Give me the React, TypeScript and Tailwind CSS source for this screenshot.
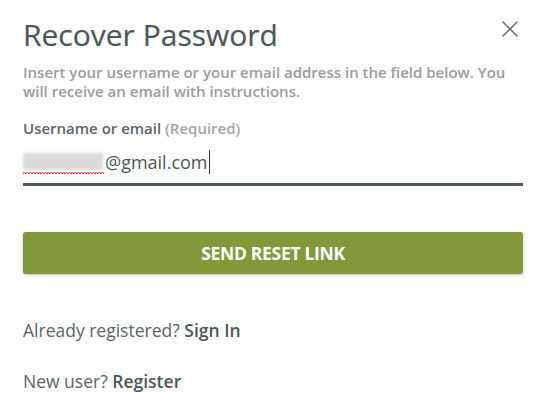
import { X } from 'lucide-react';

const Squiggle = () => (
  <svg width="82" height="4" viewBox="0 0 82 4" className="absolute left-0 bottom-[-3px]">
    <path
      d="M0 3 L1.5 1 L3 3 L4.5 1 L6 3 L7.5 1 L9 3 L10.5 1 L12 3 L13.5 1 L15 3 L16.5 1 L18 3 L19.5 1 L21 3 L22.5 1 L24 3 L25.5 1 L27 3 L28.5 1 L30 3 L31.5 1 L33 3 L34.5 1 L36 3 L37.5 1 L39 3 L40.5 1 L42 3 L43.5 1 L45 3 L46.5 1 L48 3 L49.5 1 L51 3 L52.5 1 L54 3 L55.5 1 L57 3 L58.5 1 L60 3 L61.5 1 L63 3 L64.5 1 L66 3 L67.5 1 L69 3 L70.5 1 L72 3 L73.5 1 L75 3 L76.5 1 L78 3 L79.5 1 L81 3"
      fill="none"
      stroke="#e53030"
      strokeWidth="1"
    />
  </svg>
);

const App = () => {
  return (
    <div className="relative w-[542px] h-[406px] bg-white font-['Open_Sans',sans-serif] overflow-hidden">
      {/* Close */}
      <button className="absolute right-[18px] top-[15px] text-[#6b6b6b]">
        <X className="w-[28px] h-[28px]" strokeWidth={1.3} />
      </button>

      <div className="pl-[23px] pr-[19px] pt-[14px]">
        <h1 className="text-[30px] leading-[42px] text-[#4b5759] [-webkit-text-stroke:0.2px_#4b5759]">Recover Password</h1>
        <p className="mt-[7px] text-[15px] leading-[19px] font-semibold text-[#9c9c9c]">
          Insert your username or your email address in the field below. You will receive an email with instructions.
        </p>

        <label className="block mt-[17px] text-[15px] leading-[20px] font-semibold text-[#5b6568]">
          Username or email <span className="text-[#a5a5a5]">(Required)</span>
        </label>

        {/* Input */}
        <div className="mt-[12px] border-b-[3px] border-[#4e5a5c] pb-[9px] flex items-center text-[18px] leading-[24px] text-[#4b5759]">
          <span className="relative inline-block w-[82px] h-[20px]">
            <span className="absolute left-0 right-[2px] top-[1px] h-[17px] bg-[#dadada] blur-[1.5px]" />
            <Squiggle />
          </span>
          <span>@gmail.com</span>
          <span className="ml-[1px] w-[1px] h-[24px] bg-[#333]" />
        </div>

        <button className="mt-[46px] w-full h-[42px] rounded-[3px] bg-[#82983b] shadow-[0_1px_3px_rgba(0,0,0,0.25)] text-white font-bold text-[17.5px] tracking-[-0.3px]">
          SEND RESET LINK
        </button>

        <p className="mt-[43px] text-[17.5px] leading-[26px] text-[#5b6568]">
          Already registered? <span className="font-semibold text-[#4b5759]">Sign In</span>
        </p>
        <p className="mt-[25px] text-[17.5px] leading-[26px] text-[#5b6568]">
          New user? <span className="font-semibold text-[#4b5759]">Register</span>
        </p>
      </div>
    </div>
  );
};

export default App;
